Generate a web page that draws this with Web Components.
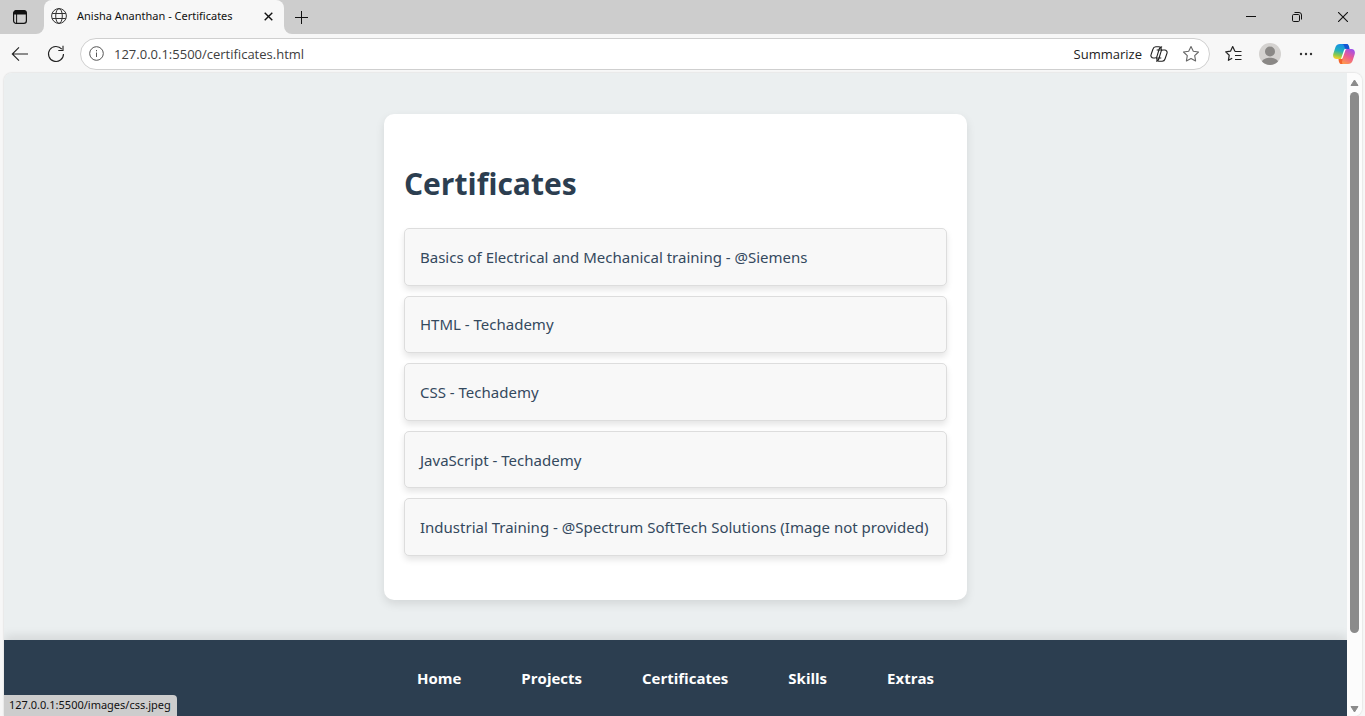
<!DOCTYPE html>
<html lang="en">
<head>
<meta charset="utf-8">
<title>Anisha Ananthan - Certificates</title>
<style>
html, body { margin: 0; height: 100%; }
body { font-family: "Open Sans", "Noto Sans", sans-serif; background: #f7f7f7; overflow: hidden; }
</style>
</head>
<body>
<browser-window>
  <tab-strip slot="tabs"><browser-tab>Anisha Ananthan - Certificates</browser-tab></tab-strip>
  <tool-bar slot="tools"></tool-bar>
  <certificates-card>
    <certificate-item>Basics of Electrical and Mechanical training - @Siemens</certificate-item>
    <certificate-item>HTML - Techademy</certificate-item>
    <certificate-item>CSS - Techademy</certificate-item>
    <certificate-item>JavaScript - Techademy</certificate-item>
    <certificate-item>Industrial Training - @Spectrum SoftTech Solutions (Image not provided)</certificate-item>
  </certificates-card>
  <site-footer></site-footer>
  <scroll-bar slot="scroll"></scroll-bar>
  <status-bubble slot="status">127.0.0.1:5500/images/css.jpeg</status-bubble>
</browser-window>
<script>
const reset = `
  :host, *, *::before, *::after { box-sizing: border-box; }
  button { border: 0; padding: 0; background: none; color: inherit; font: inherit; display: grid; place-items: center; }
  svg { display: block; fill: none; stroke: currentColor; }
  svg.filled { stroke: none; }
`;
function define(name, css, html) {
  customElements.define(name, class extends HTMLElement {
    constructor() {
      super();
      this.attachShadow({ mode: "open" }).innerHTML = `<style>${reset}${css}</style>${html}`;
    }
  });
}

define("browser-window", `
  :host { display: flex; flex-direction: column; height: 100vh; }
  .frame { flex: 1; min-height: 0; display: flex; margin: 0 3px 0 4px; position: relative;
    border-radius: 8px 8px 8px 0; overflow: hidden; background: #fcfcfc; box-shadow: 0 0 2px rgba(0,0,0,.2); }
  .page { flex: 1; min-width: 0; overflow: hidden; background: #ebeff0; }
`, `
  <slot name="tabs"></slot>
  <slot name="tools"></slot>
  <div class="frame">
    <div class="page"><slot></slot></div>
    <slot name="scroll"></slot>
    <slot name="status"></slot>
  </div>
`);

define("tab-strip", `
  :host { display: flex; height: 34px; background: #cdcdcd; color: #111; }
  .menu { width: 44px; background: #cdcdcd; border-bottom-right-radius: 8px; padding-right: 4px; }
  .under { background: #f7f7f7; display: flex; }
  .rest { flex: 1; display: flex; background: #cdcdcd; border-bottom-left-radius: 8px; }
  .after { flex: 1; display: flex; background: #f7f7f7; }
  .new { width: 34px; }
  .window { margin-left: auto; display: flex; }
  .window button { width: 46px; padding-left: 2px; }
`, `
  <div class="under"><button class="menu" aria-label="Tab actions">
    <svg width="16" height="16" viewBox="0 0 16 16"><rect x="1.6" y="1.6" width="12.8" height="12.8" rx="2.6" stroke-width="1.2"/><path d="M2 5V4a2.4 2.4 0 0 1 2.4-2.4h7.2A2.4 2.4 0 0 1 14 4v1z" fill="currentColor"/><path d="M4.6 5v9" stroke-width="1"/></svg>
  </button></div>
  <slot></slot>
  <div class="after"><div class="rest">
    <button class="new" aria-label="New tab"><svg width="14" height="14" viewBox="0 0 14 14"><path d="M7.5 1v13M1 7.5h13"/></svg></button>
    <div class="window">
      <button aria-label="Minimize"><svg width="10" height="10" viewBox="0 0 10 10"><path d="M0 4.5h10"/></svg></button>
      <button aria-label="Restore"><svg width="10" height="10" viewBox="0 0 10 10"><rect x=".5" y="2.5" width="7" height="7" rx="1.2"/><path d="M2.5 .5H7a2.5 2.5 0 0 1 2.5 2.5v4.5"/></svg></button>
      <button aria-label="Close"><svg width="10" height="10" viewBox="0 0 10 10"><path d="M0 0l10 10M10 0L0 10" stroke-width="1.1"/></svg></button>
    </div>
  </div></div>
`);

define("browser-tab", `
  :host { display: flex; align-items: center; width: 240px; padding: 0 10px 2px 7px; background: #f7f7f7;
    border-radius: 8px 8px 0 0; font-family: "Noto Sans", sans-serif; font-size: 11px; line-height: 16px; color: #111; }
  .title { margin-left: 10px; flex: 1; white-space: nowrap; }
  svg { color: #333; }
  button { width: 12px; height: 16px; }
  button svg { color: #111; }
`, `
  <svg width="16" height="16" viewBox="0 0 16 16"><circle cx="8" cy="8" r="7.4"/><ellipse cx="8" cy="8" rx="3.3" ry="7.4"/><path d="M1.2 5.5h13.6M1.2 10.5h13.6"/></svg>
  <span class="title"><slot></slot></span>
  <button aria-label="Close tab"><svg width="9" height="9" viewBox="0 0 9 9"><path d="M.7 .7l7.6 7.6M8.3 .7L.7 8.3" stroke-width="1.4"/></svg></button>
`);

define("tool-bar", `
  :host { display: flex; align-items: center; height: 39px; padding-left: 2px; background: #f7f7f7; color: #222; }
  button { width: 36px; height: 32px; }
  .address { flex: 1; min-width: 0; height: 32px; margin-left: 6px; display: flex; align-items: center;
    border: 1px solid #cfcfcf; border-radius: 16px; background: #fff; }
  .info { width: 30px; height: 30px; color: #555; }
  input { flex: 1; min-width: 0; border: 0; outline: 0; padding: 0 0 0 3px; background: none; font: inherit; font-size: 13px; line-height: 20px; color: #404040; height: 20px; }
  .summary { width: auto; display: flex; align-items: center; gap: 8px; font-size: 13px; line-height: 20px; height: 30px; }
  .star { width: 36px; margin-left: 5px; color: #666; }
  .star svg { margin-right: 1px; }
  .side { display: flex; margin-left: 6px; }
  .copilot { width: 40px; margin-right: 1px; }
`, `
  <button aria-label="Back"><svg width="18" height="16" viewBox="0 0 18 16"><path d="M17 8H1.5M8 1.3L1.3 8 8 14.7" stroke-width="1.1"/></svg></button>
  <button aria-label="Refresh"><svg width="18" height="18" viewBox="0 0 18 18"><path d="M16.5 9A7.5 7.5 0 1 1 14.8 4.2M16 .8v4.700h-4.700" stroke-width="1.1"/></svg></button>
  <div class="address">
    <button class="info" aria-label="Site information"><svg width="15" height="15" viewBox="0 0 15 15"><circle cx="7.5" cy="7.5" r="6.8"/><path d="M7.5 6.5v4.5M7.5 4v1.3"/></svg></button>
    <input aria-label="Address" value="127.0.0.1:5500/certificates.html">
    <button class="summary">Summarize
      <svg width="18" height="16" viewBox="0 0 18 16" stroke-width="1.1"><path d="M11.5 3.8L10.9 2A2 2 0 0 0 9 .8H5.8A3 3 0 0 0 3 3L1.1 8.5A2.5 2.5 0 0 0 3.5 12H5a2 2 0 0 0 1.9-1.4L9.2 3a3 3 0 0 1 2.9-2.1"/><path d="M6.500 12.200l.6 1.800A2 2 0 0 0 9 15.200h3.200A3 3 0 0 0 15 13l1.900-5.500A2.500 2.500 0 0 0 14.500 4H13a2 2 0 0 0-1.900 1.400L8.800 13A3 3 0 0 1 6 15.200M6.200 12h5.100M6.700 4h5.800"/></svg>
    </button>
    <button class="star" aria-label="Add to favorites"><svg width="18" height="18" viewBox="0 0 18 18"><path d="M9 1.500l2.300 4.700 5.200.8-3.800 3.700.9 5.200L9 13.500l-4.600 2.400.9-5.200L1.500 7l5.200-.8z" stroke-width="1.100" stroke-linejoin="round"/></svg></button>
  </div>
  <div class="side">
    <button aria-label="Favorites"><svg width="18" height="18" viewBox="0 0 18 18"><path d="M10 6.500L7.700 1.500 5.500 6.200l-4.800.7 3.500 3.400-.8 5 3.800-2.100M10 6.500h6.500M10 10.500h6.500M10 14.500h6.500" stroke-width="1.200" stroke-linejoin="round"/></svg></button>
    <button aria-label="Profile"><svg class="filled" width="22" height="22" viewBox="0 0 22 22"><circle cx="11" cy="11" r="11" fill="#d4d2d0"/><circle cx="11" cy="8.500" r="5" fill="#8a8886"/><path d="M3 18.500c2-5 14-5 16 0a11 11 0 0 1-16 0z" fill="#8a8886"/></svg></button>
    <button aria-label="Settings and more"><svg class="filled" width="14" height="4" viewBox="0 0 14 4"><g fill="#333"><circle cx="2" cy="2" r="1.200"/><circle cx="7" cy="2" r="1.200"/><circle cx="12" cy="2" r="1.200"/></g></svg></button>
    <button class="copilot" aria-label="Copilot"><svg class="filled" width="22" height="20" viewBox="0 0 22 20">
      <defs>
        <linearGradient id="a" x1=".5" y1="0" x2=".3" y2="1"><stop offset="0" stop-color="#168ee8"/><stop offset=".45" stop-color="#22b1bd"/><stop offset=".75" stop-color="#8cc94b"/><stop offset="1" stop-color="#ffd02b"/></linearGradient>
        <linearGradient id="b" x1=".8" y1="0" x2=".3" y2="1"><stop offset="0" stop-color="#9d50ef"/><stop offset=".5" stop-color="#ec5b91"/><stop offset="1" stop-color="#ff9a4d"/></linearGradient>
      </defs>
      <path d="M7 0h8l-2 5-3 8.500c-.3 1-1.200 1.500-2.200 1.500H3.500C.7 15-.5 12.500.4 9.500L2.500 3C3.200 1 4.800 0 7 0z" fill="url(#a)"/>
      <path d="M9 0h4.500c1.600 0 2.200 1.200 2.600 2.500L16.600 5h-2.800c-1.500 0-2-.7-2.400-2.200C11 1 10.500 0 9 0z" fill="#1555d2"/>
      <path d="M15 20H7l2-5 3-8.500C12.300 5.500 13.200 5 14.200 5h4.300c2.800 0 4 2.500 3.100 5.500L19.500 17c-.7 2-2.300 3-4.500 3z" fill="url(#b)"/>
      <path d="M5.500 15H8l2-1.500-.8 3.500c-.3 1.300-.2 2.600.6 3H8.300c-1.500 0-2.100-1.200-2.500-2.700z" fill="#f3642d"/>
      <path d="M12.500 6L9.500 14.500c-.1.300-.4.500-.7.500H8l3.100-9.200c.2-.5.500-.8 1-.8h1.700c-.7 0-1.100.4-1.300 1z" fill="#fff"/>
    </svg></button>
  </div>
`);

define("certificates-card", `
  :host { display: flex; justify-content: center; padding: 41px 20px 40px; }
  section { width: 100%; max-width: 583px; padding: 20px 20px 44px; border-radius: 10px; background: #fff; box-shadow: 0 4px 10px rgba(0,0,0,.1); }
  h1 { margin: 24px 0 18px; font-size: 30px; line-height: 52px; font-weight: 700; color: #2c3e50; }
  .list { display: grid; grid-auto-rows: 1fr; gap: 10px; min-height: 328px; }
`, `<section><h1>Certificates</h1><div class="list" role="list"><slot></slot></div></section>`);

define("certificate-item", `
  :host { display: flex; align-items: center; padding: 0 15px; border: 1px solid #ddd; border-radius: 5px;
    background: #f8f8f8; box-shadow: 0 4px 6px rgba(0,0,0,.1); }
  a { color: #34495e; text-decoration: none; font-family: "Noto Sans", sans-serif; font-size: 15px; line-height: 26px; white-space: nowrap; }
`, `<a href="#"><slot></slot></a>`);

define("site-footer", `
  :host { display: block; min-height: 120px; padding: 25px 20px; background: #2c3e50; box-shadow: 0 -4px 10px rgba(0,0,0,.1); }
  nav { display: flex; justify-content: center; gap: 60px; }
  a { color: #fff; text-decoration: none; font-size: 15px; line-height: 26px; font-weight: 700; }
`, `<nav><a href="#">Home</a><a href="#">Projects</a><a href="#">Certificates</a><a href="#">Skills</a><a href="#">Extras</a></nav>`);

define("scroll-bar", `
  :host { display: flex; flex-direction: column; align-items: center; gap: 5px; width: 15px; padding: 6px 0 3px; background: #fcfcfc; color: #8b8b8b; }
  .track { flex: 1; width: 9px; }
  .thumb { height: 89%; border-radius: 5px; background: #8b8b8b; }
`, `
  <svg width="9" height="8" viewBox="0 0 9 8"><path d="M4.500 1L8 6.500H1z" fill="currentColor" stroke-linejoin="round"/></svg>
  <div class="track"><div class="thumb"></div></div>
  <svg width="9" height="8" viewBox="0 0 9 8"><path d="M4.500 7L1 1.500h7z" fill="currentColor" stroke-linejoin="round"/></svg>
`);

define("status-bubble", `
  :host { position: absolute; left: 0; bottom: 0; padding: 2px 6px 3px 5px; border-top-right-radius: 4px;
    background: #cdcdcd; color: #111; font-family: "Noto Sans", sans-serif; font-size: 11px; line-height: 16px; white-space: nowrap; }
`, `<slot></slot>`);
</script>
</body>
</html>
